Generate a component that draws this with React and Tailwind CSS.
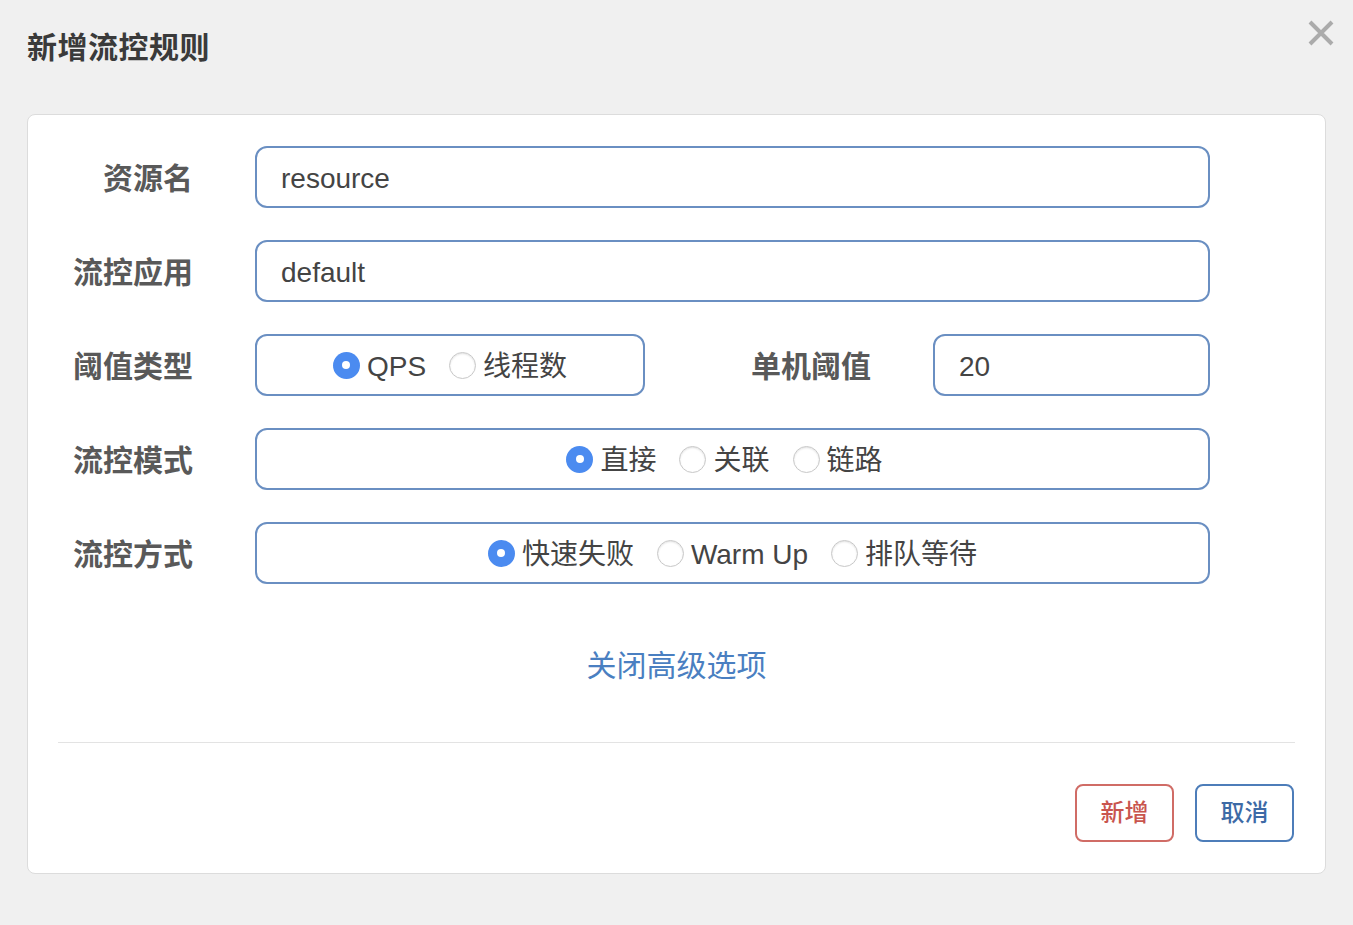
import React, { useState } from 'react';

const font = { fontFamily: '"Liberation Sans", "Noto Sans CJK SC", sans-serif' };

function Radio({ checked, label, onClick }) {
  return (
    <label className="flex items-center cursor-pointer" onClick={onClick}>
      {checked ? (
        <span className="w-[27px] h-[27px] rounded-full bg-[#4b8bf0] flex items-center justify-center">
          <span className="w-[8px] h-[8px] rounded-full bg-white" />
        </span>
      ) : (
        <span className="w-[27px] h-[27px] rounded-full bg-white border border-[#c8c8c8] shadow-[inset_0_1px_2px_rgba(0,0,0,0.12)]" />
      )}
      <span className="ml-[7px] pt-[4px] text-[28px] leading-none text-[#444]">{label}</span>
    </label>
  );
}

function RadioGroup({ options, value, onChange, shift = '' }) {
  return (
    <div className={`flex items-center justify-center gap-[23px] h-full ${shift}`}>
      {options.map(o => (
        <Radio key={o} label={o} checked={value === o} onClick={() => onChange(o)} />
      ))}
    </div>
  );
}

function Label({ children }) {
  return (
    <div className="w-[165px] shrink-0 pt-[4px] text-right text-[30px] font-bold text-[#595959] leading-none">
      {children}
    </div>
  );
}

const boxCls = 'h-[62px] border-2 border-[#6a8fc2] rounded-[12px] bg-white';
const inputCls = 'flex items-center px-[24px] pt-[3px] text-[28px] text-[#444]';

export default function App() {
  const [grade, setGrade] = useState('QPS');
  const [strategy, setStrategy] = useState('直接');
  const [behavior, setBehavior] = useState('快速失败');

  return (
    <div className="w-[1353px] h-[925px] bg-[#f0f0f0] overflow-hidden" style={font}>
      <div className="relative pt-[30px] pl-[27px] h-[114px]">
        <h1 className="text-[30px] leading-[36px] font-bold text-[#3a3a3a] tracking-[0.5px]">新增流控规则</h1>
        <button className="absolute right-[19px] top-[20px] w-[26px] h-[26px]">
          <svg viewBox="0 0 26 26" width="26" height="26">
            <path d="M2 2 L24 24 M24 2 L2 24" stroke="#ababab" strokeWidth="4" strokeLinecap="butt" />
          </svg>
        </button>
      </div>

      <div className="ml-[27px] w-[1299px] bg-white border border-[#dcdcdc] rounded-[8px] pt-[31px] pb-[31px]">
        <div className="flex flex-col gap-[32px]">
          <div className="flex items-center">
            <Label>资源名</Label>
            <div className={`${boxCls} ${inputCls} ml-[62px] w-[955px]`}>resource</div>
          </div>
          <div className="flex items-center">
            <Label>流控应用</Label>
            <div className={`${boxCls} ${inputCls} ml-[62px] w-[955px]`}>default</div>
          </div>
          <div className="flex items-center">
            <Label>阈值类型</Label>
            <div className={`${boxCls} ml-[62px] w-[390px]`}>
              <RadioGroup options={['QPS', '线程数']} value={grade} onChange={setGrade} />
            </div>
            <div className="flex-1 pt-[4px] text-right text-[30px] font-bold text-[#595959] leading-none">单机阈值</div>
            <div className={`${boxCls} ${inputCls} ml-[62px] w-[277px]`}>20</div>
            <div className="w-[115px]" />
          </div>
          <div className="flex items-center">
            <Label>流控模式</Label>
            <div className={`${boxCls} ml-[62px] w-[955px]`}>
              <RadioGroup options={['直接', '关联', '链路']} value={strategy} onChange={setStrategy} shift="pr-[16px]" />
            </div>
          </div>
          <div className="flex items-center">
            <Label>流控方式</Label>
            <div className={`${boxCls} ml-[62px] w-[955px]`}>
              <RadioGroup options={['快速失败', 'Warm Up', '排队等待']} value={behavior} onChange={setBehavior} />
            </div>
          </div>
        </div>

        <div className="mt-[64px] text-center">
          <a className="text-[30px] leading-[36px] text-[#4a7fc1] cursor-pointer">关闭高级选项</a>
        </div>

        <div className="mt-[58px] mx-[30px] h-px bg-[#e3e3e3]" />

        <div className="mt-[41px] mr-[31px] flex justify-end gap-[21px]">
          <button className="w-[99px] h-[58px] border-2 border-[#d06c66] rounded-[8px] text-[24px] font-medium text-[#c9554e] bg-white">新增</button>
          <button className="w-[99px] h-[58px] border-2 border-[#4d7db9] rounded-[8px] text-[24px] font-medium text-[#3d6aa6] bg-white">取消</button>
        </div>
      </div>
    </div>
  );
}
